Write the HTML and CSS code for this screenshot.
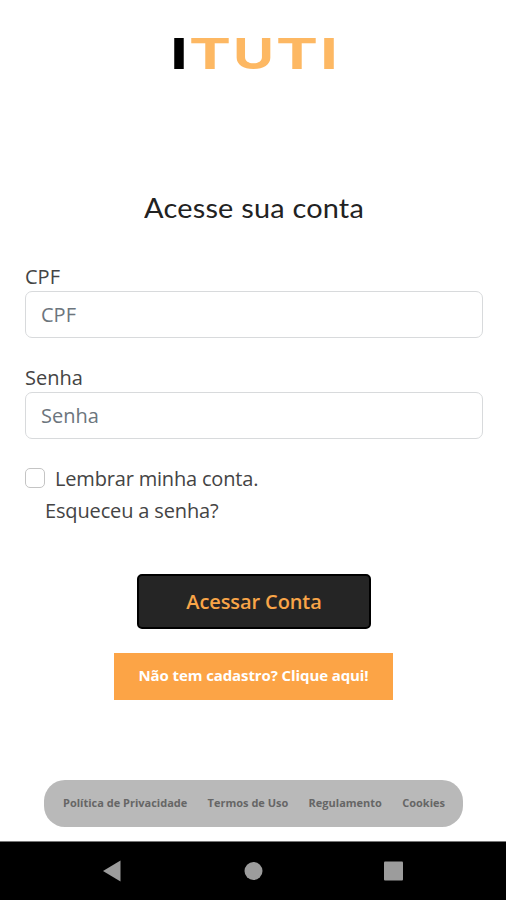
FILE: index.html
```html
<!DOCTYPE html>
<html lang="pt-BR">
<head>
<meta charset="utf-8">
<title>ITUTI</title>
<link rel="stylesheet" href="styles.css">
</head>
<body>
<main class="page">
  <svg class="logo" width="166" height="40" viewBox="0 0 166 40" role="img" aria-label="ITUTI">
    <text class="dark" x="-1" y="35" textLength="18" lengthAdjust="spacingAndGlyphs">I</text>
    <text x="18" y="35" textLength="42" lengthAdjust="spacingAndGlyphs">T</text>
    <text x="62" y="35" textLength="41" lengthAdjust="spacingAndGlyphs">U</text>
    <text x="105" y="35" textLength="42" lengthAdjust="spacingAndGlyphs">T</text>
    <text x="149" y="35" textLength="18" lengthAdjust="spacingAndGlyphs">I</text>
  </svg>
  <h1 class="title"><span>Acesse sua conta</span></h1>
  <form class="form">
    <div class="field">
      <label for="cpf">CPF</label>
      <input id="cpf" type="text" placeholder="CPF">
    </div>
    <div class="field">
      <label for="senha">Senha</label>
      <input id="senha" type="password" placeholder="Senha">
    </div>
    <label class="remember"><input type="checkbox"><span>Lembrar minha conta.</span></label>
    <a class="forgot">Esqueceu a senha?</a>
    <button class="submit" type="button">Acessar Conta</button>
    <a class="signup">Não tem cadastro? Clique aqui!</a>
  </form>
  <footer class="links">
    <a>Política de Privacidade</a>
    <a>Termos de Uso</a>
    <a>Regulamento</a>
    <a>Cookies</a>
  </footer>
</main>
<nav class="system">
  <svg width="20" height="22" viewBox="0 0 20 22"><path d="M18.500 .5v21L1 11z"/></svg>
  <svg width="20" height="22" viewBox="0 0 20 22"><circle cx="10.500" cy="11" r="9"/></svg>
  <svg width="20" height="22" viewBox="0 0 20 22"><rect x="0" y="1.500" width="19" height="19" rx="1"/></svg>
</nav>
</body>
</html>
```
FILE: styles.css
```css
* { box-sizing: border-box; }
body {
  margin: 0;
  height: 900px;
  display: flex;
  flex-direction: column;
  overflow: hidden;
  background: #fff;
  color: #444;
  font-family: "Open Sans", sans-serif;
  font-size: 20px;
}
.page {
  height: 841px;
  padding: 34px 23px 0 25px;
  display: flex;
  flex-direction: column;
}
.logo {
  margin-left: 146px;
  overflow: visible;
  fill: #fdb863;
  font: 700 43px Inter, sans-serif;
}
.logo .dark { fill: #000; }
.title {
  margin: 119px 0 0;
  height: 30px;
  text-align: center;
  color: #222;
  font: 400 26px/30px Lato, sans-serif;
}
.title span {
  display: inline-block;
  letter-spacing: .2px;
  transform: scaleX(1.11);
}
.form {
  margin-top: 39px;
  display: flex;
  flex-direction: column;
}
.field {
  height: 101px;
  display: flex;
  flex-direction: column;
}
.field label { height: 29px; line-height: 30px; }
.field input {
  height: 47px;
  padding: 0 15px;
  border: 1px solid #d8dadc;
  border-radius: 7px;
  outline: 0;
  font: inherit;
}
.field input::placeholder { color: #6c757d; opacity: 1; }
.remember {
  height: 30px;
  margin-top: -1px;
  display: flex;
  align-items: center;
  gap: 10px;
  letter-spacing: -.18px;
}
.remember input {
  appearance: none;
  width: 20px;
  height: 20px;
  margin: 0;
  border: 1px solid #c4c4c4;
  border-radius: 5px;
}
.forgot {
  margin: 3px 0 0 20px;
  height: 30px;
  line-height: 29px;
  letter-spacing: -.15px;
}
.submit {
  margin: 48px 0 0 112px;
  width: 234px;
  height: 55px;
  border: 2px solid #000;
  border-radius: 5px;
  background: #252525;
  color: #f9a548;
  font: 600 20px "Open Sans", sans-serif;
  letter-spacing: -.1px;
}
.signup {
  margin: 24px 0 0 89px;
  width: 279px;
  height: 47px;
  line-height: 45px;
  background: #fca446;
  color: #fff;
  text-align: center;
  font-size: 15px;
  font-weight: 700;
  letter-spacing: -.1px;
}
.links {
  margin: 80px 0 0 19px;
  width: 419px;
  height: 47px;
  padding: 0 18px 2px 19px;
  display: flex;
  align-items: center;
  justify-content: space-between;
  border-radius: 21px;
  background: #b9b9b9;
  color: #666;
  font-size: 11px;
  font-weight: 700;
}
.system {
  height: 59px;
  padding: 0 102px;
  display: flex;
  align-items: center;
  justify-content: space-between;
  border-top: 1px solid #777;
  background: #000;
  fill: #9c9c9c;
}
```
